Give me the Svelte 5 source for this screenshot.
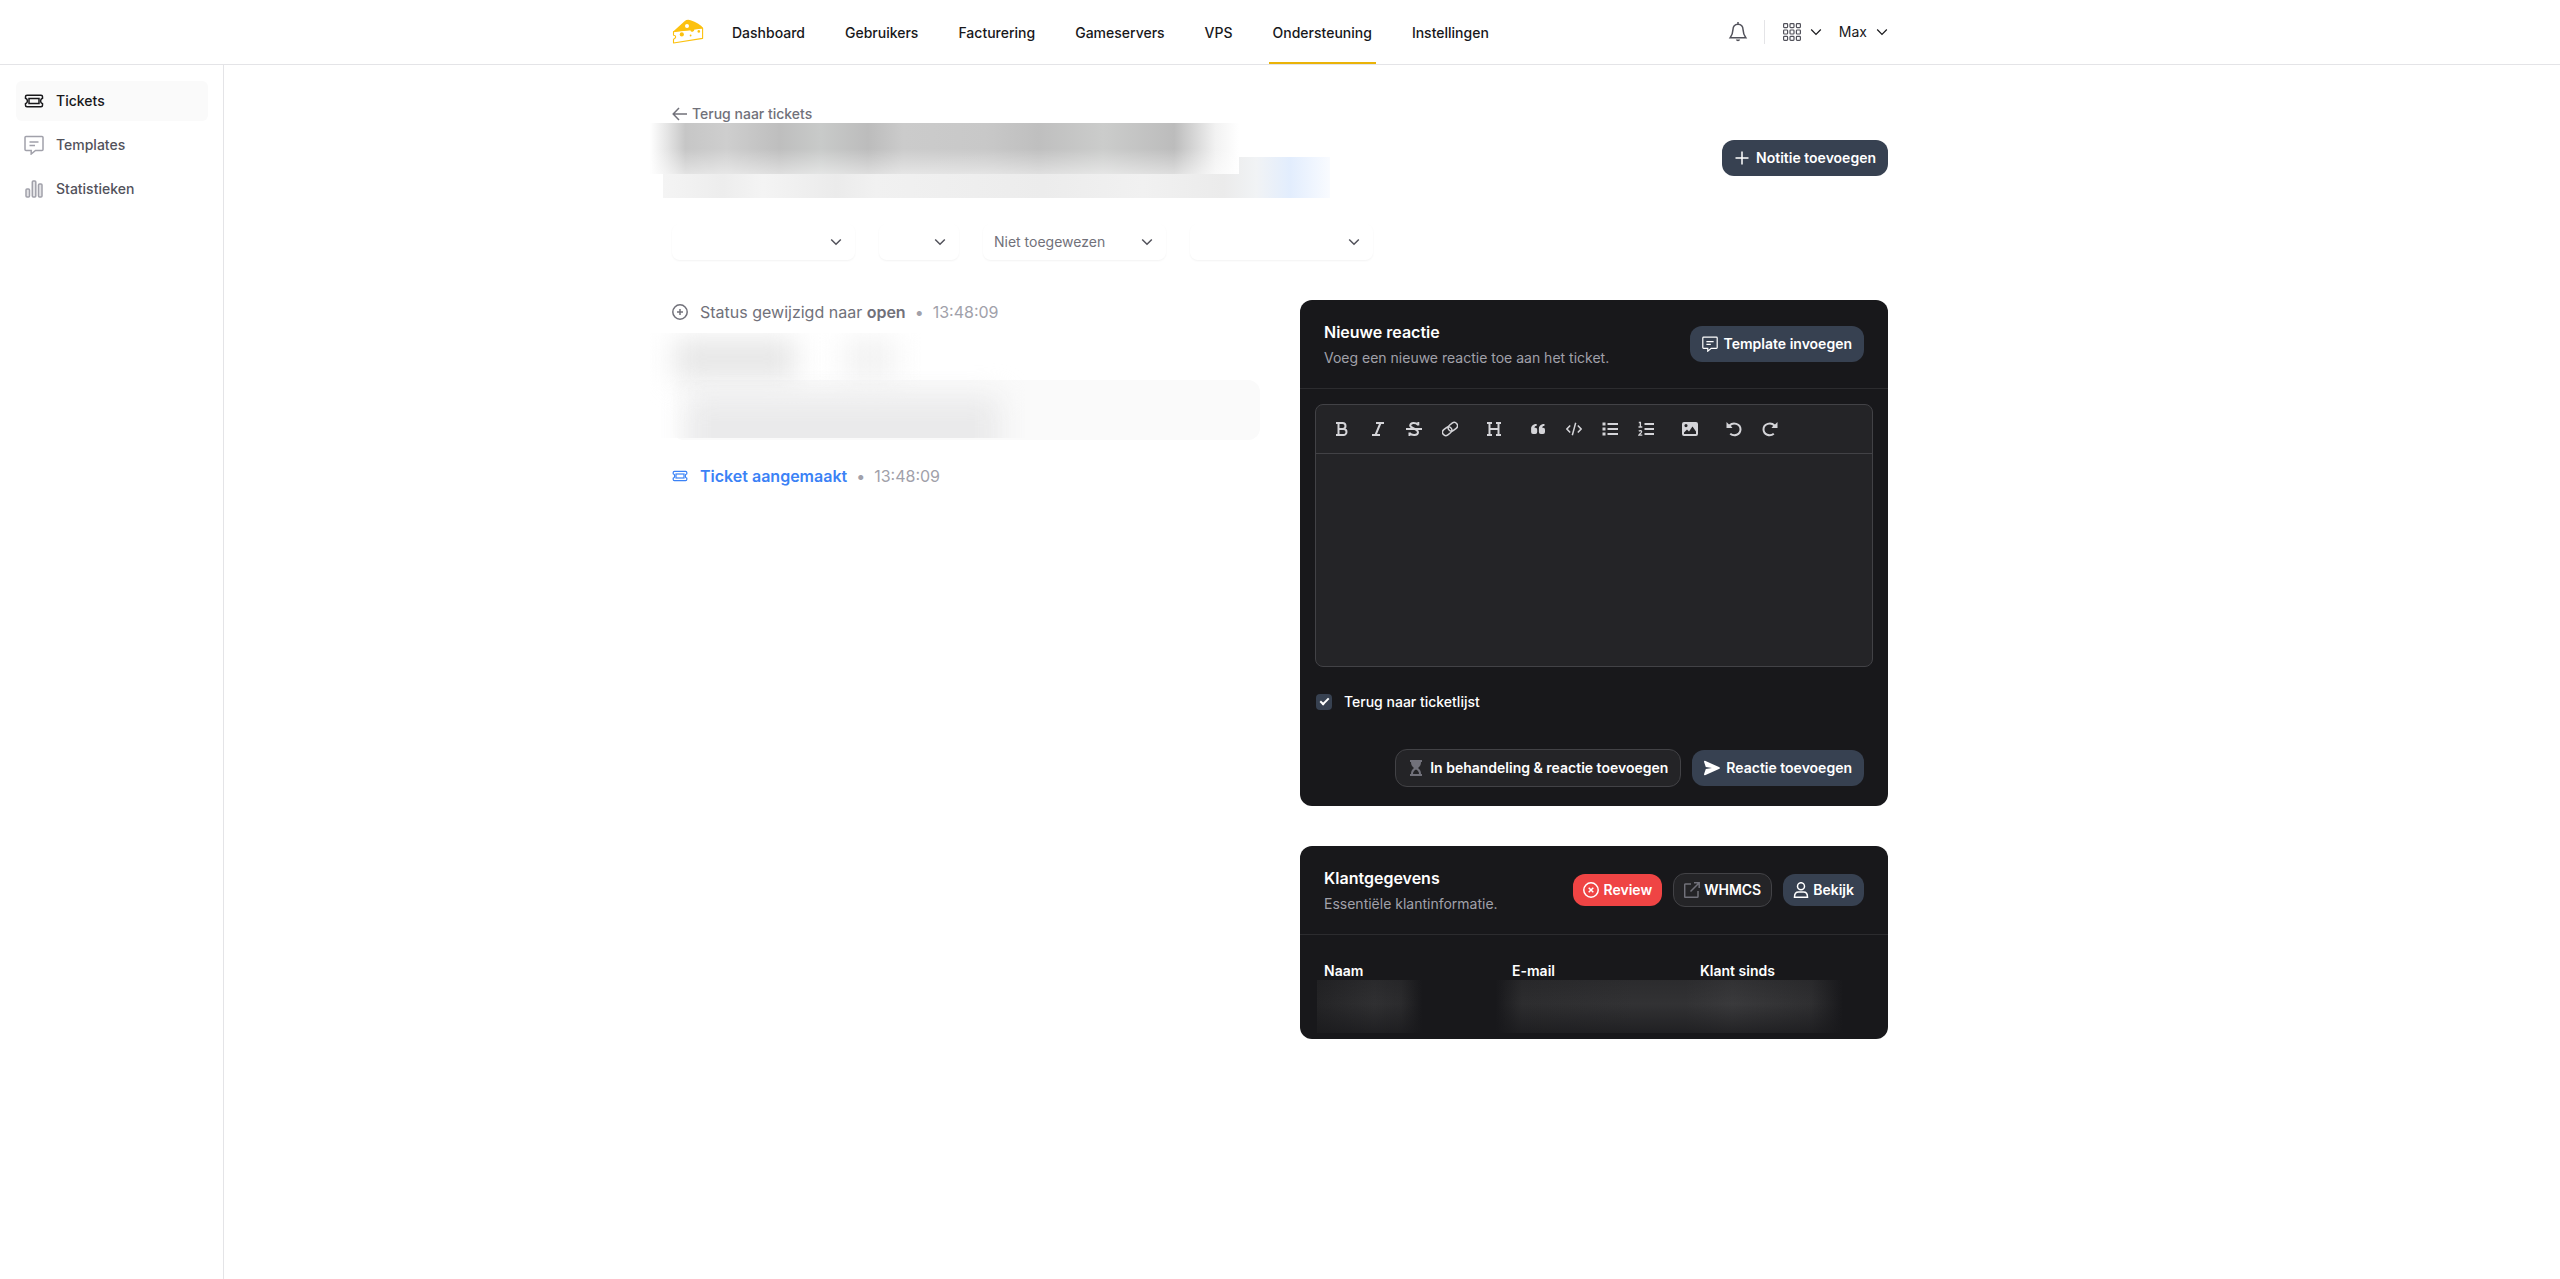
<script>
  const nav = ['Dashboard', 'Gebruikers', 'Facturering', 'Gameservers', 'VPS', 'Ondersteuning', 'Instellingen'];
  const active = 'Ondersteuning';
  const tools = [
    { icon: 'bold', label: 'Vet' },
    { icon: 'italic', label: 'Cursief' },
    { icon: 'strike', label: 'Doorhalen' },
    { icon: 'link', label: 'Link', end: true },
    { icon: 'heading', label: 'Kop', end: true },
    { icon: 'quote', label: 'Citaat' },
    { icon: 'code', label: 'Code' },
    { icon: 'bullets', label: 'Opsomming' },
    { icon: 'numbers', label: 'Genummerde lijst', end: true },
    { icon: 'image', label: 'Afbeelding', end: true },
    { icon: 'undo', label: 'Ongedaan maken' },
    { icon: 'redo', label: 'Opnieuw' }
  ];
  const filters = [
    { label: 'Afdeling', value: '', size: 'wide' },
    { label: 'Prioriteit', value: '', size: 'narrow' },
    { label: 'Medewerker', value: 'Niet toegewezen', size: 'wide' },
    { label: 'Status', value: '', size: 'wide' }
  ];
  let back = $state(true);
</script>

{#snippet ticket()}
  <path d="M3 4.200h14q1.500 0 1.500 1.500v1.500a3 3 0 0 0 0 5.600v1.500q0 1.500-1.500 1.500H3q-1.500 0-1.500-1.500v-1.500a3 3 0 0 0 0-5.600V5.700q0-1.500 1.500-1.500z" />
  <rect x="5" y="7.500" width="10" height="5" />
{/snippet}

{#snippet note()}
  <path d="M2 1.500h16q1 0 1 1v12q0 1-1 1h-6.500L7.200 19v-3.500H2q-1 0-1-1v-12q0-1 1-1z" />
  <path d="M5.500 7h9M5.500 10.500h5.500" />
{/snippet}

{#snippet chevron()}
  <svg class="chev" viewBox="0 0 12 12" aria-hidden="true"><path d="M1.200 3.500 6 8.300l4.800-4.800" /></svg>
{/snippet}

<header class="top">
  <div class="wrap bar">
    <a class="logo" href="#home" aria-label="Home">
      <svg viewBox="0 0 32 26" aria-hidden="true">
        <path fill="#fcc10f" d="M1.200 12.400 12.500 2.200Q15 .2 18.500 1.200 27 3.600 31 9l-6.800 1-2 .3a2 2 0 0 1-3.900.9z" />
        <circle cx="15" cy="7" r="2" fill="#fff" />
        <path fill="none" stroke="#fcc10f" stroke-width="1.100" stroke-linejoin="round" d="M1.500 12.600 30.600 9v10.400L1.500 24v-3.800q2.400-.8 2.100-2.500t-2.100-1.500z" />
        <circle cx="9.800" cy="15.400" r="2.100" fill="#fcc10f" />
        <circle cx="18.600" cy="16.500" r=".9" fill="#fcc10f" />
        <circle cx="26.800" cy="12.400" r="1.300" fill="#fcc10f" />
      </svg>
    </a>
    <nav>
      {#each nav as item}
        <a href="#{item}" class:active={item === active}>{item}</a>
      {/each}
    </nav>
    <div class="tools">
      <button class="plain" aria-label="Meldingen">
        <svg class="i20" viewBox="0 0 20 20" aria-hidden="true"><path d="M10 2.200c3.200 0 5 2.500 5.100 5.800.1 3.600 1.100 5.500 2.700 7.700H2.200c1.600-2.200 2.600-4.100 2.700-7.700C5 4.700 6.800 2.200 10 2.200zM10 0v2" /><path d="M7.800 17.600h4.400q-.4 1.700-2.200 1.700t-2.200-1.700z" fill="currentColor" stroke="none" /></svg>
      </button>
      <span class="divider"></span>
      <button class="plain apps" aria-label="Apps">
        <svg class="i18" viewBox="0 0 18 18" aria-hidden="true">
          {#each [0.6, 7, 13.4] as x}{#each [0.6, 7, 13.4] as y}<rect {x} {y} width="4" height="4" rx=".8" />{/each}{/each}
        </svg>
        {@render chevron()}
      </button>
      <button class="plain user">Max {@render chevron()}</button>
    </div>
  </div>
</header>

<div class="body">
  <aside>
    <a class="current" href="#tickets"><svg class="i20" viewBox="0 0 20 20" aria-hidden="true">{@render ticket()}</svg>Tickets</a>
    <a href="#templates"><svg class="i20" viewBox="0 0 20 20" aria-hidden="true">{@render note()}</svg>Templates</a>
    <a href="#stats"><svg class="i20" viewBox="0 0 20 20" aria-hidden="true"><g fill="#e4e4e7"><rect x="2" y="10" width="3.500" height="8" rx="1" /><rect x="8.300" y="2" width="3.500" height="16" rx="1" /><rect x="14.500" y="5" width="3.500" height="13" rx="1" /></g></svg>Statistieken</a>
  </aside>

  <main>
    <div class="wrap">
      <a class="back" href="#tickets"><svg class="i16" viewBox="0 0 16 16" aria-hidden="true"><path d="M15 8H1.500M7 2 1.200 8 7 14" /></svg>Terug naar tickets</a>
      <div class="heading">
        <div class="redacted" aria-hidden="true">
          <div class="r-title"></div>
          <div class="r-meta"></div>
        </div>
        <button class="btn primary"><svg class="i16" viewBox="0 0 16 16" aria-hidden="true"><path d="M8 1.500v13M1.500 8h13" /></svg>Notitie toevoegen</button>
      </div>

      <div class="filters">
        {#each filters as f}
          <div class="filter {f.size}">
            <select aria-label={f.label}><option>{f.value}</option></select>
            {@render chevron()}
          </div>
        {/each}
      </div>

      <div class="columns">
        <section class="timeline">
          <div class="event">
            <svg class="i16" viewBox="0 0 16 16" aria-hidden="true"><circle cx="8" cy="8" r="7.200" /><path d="M8 5v6M5 8h6" /></svg>
            <span>Status gewijzigd naar <b>open</b></span><i>•</i><time>13:48:09</time>
          </div>
          <div class="message" aria-hidden="true">
            <div class="card"></div>
            <div class="veil">
              <div class="line"><span class="name"></span><span class="when"></span></div>
              <div class="text"></div>
            </div>
          </div>
          <div class="event created">
            <svg class="i16" viewBox="0 0 20 20" aria-hidden="true">{@render ticket()}</svg>
            <b>Ticket aangemaakt</b><i>•</i><time>13:48:09</time>
          </div>
        </section>

        <div class="side">
          <section class="panel">
            <div class="head">
              <div><h2>Nieuwe reactie</h2><p>Voeg een nieuwe reactie toe aan het ticket.</p></div>
              <button class="btn primary"><svg class="i16" viewBox="0 0 20 20" aria-hidden="true">{@render note()}</svg>Template invoegen</button>
            </div>
            <div class="editor">
              <div class="toolbar">
                {#each tools as t}
                  <button class:end={t.end} aria-label={t.label}>
                    <svg class="i16" viewBox="0 0 16 16" aria-hidden="true">
                      {#if t.icon === 'bold'}<path d="M2 2h6.500a3 3 0 0 1 0 6H4.500M8.500 8h1a3 3 0 0 1 0 6H2M4.500 2v12" />
                      {:else if t.icon === 'italic'}<path d="M6 2h8M2 14h8M10.500 2l-5 12" />
                      {:else if t.icon === 'strike'}<path d="M0 8h16M12 3.800C10 1.500 4.500 1.200 4.200 4.500 4 7.500 12 7.500 12 11.200c0 3.800-6.500 3.500-8.500 1" /><path d="M12.300 1v3.500M3.500 11.500V15" />
                      {:else if t.icon === 'link'}<g class="thin" transform="rotate(-38 8 8)"><rect x="-.6" y="4.700" width="10" height="6.600" rx="3.300" /><rect x="6.600" y="4.700" width="10" height="6.600" rx="3.300" /></g>
                      {:else if t.icon === 'heading'}<path d="M1 2h5M10 2h5M1 14h5M10 14h5M3.500 2v12M12.500 2v12M3.500 8h9" />
                      {:else if t.icon === 'quote'}<path class="solid" d="M6.700 3v1.800c-1.500 0-2.200.8-2.200 2h.8a1.900 1.900 0 0 1 1.900 2v2.300A1.900 1.900 0 0 1 5.300 13H3a1.900 1.900 0 0 1-1.900-1.900V7.500C1.100 4.800 3.300 3 6.700 3zM14.500 3v1.800c-1.500 0-2.200.8-2.200 2h.8a1.900 1.900 0 0 1 1.900 2v2.300a1.900 1.900 0 0 1-1.900 1.900h-2.300a1.900 1.900 0 0 1-1.900-1.900V7.500C8.900 4.800 11.100 3 14.500 3z" />
                      {:else if t.icon === 'code'}<path class="thin" d="M4.200 4.500.9 8l3.300 3.500M11.800 4.500 15.100 8l-3.300 3.500M9.700 1.800 6.300 14.200" />
                      {:else if t.icon === 'bullets'}<path d="M5.500 3H16M5.500 8H16M5.500 13H16" /><path class="solid" d="M.5 1.500h3v3h-3zM.5 6.500h3v3h-3zM.5 11.500h3v3h-3z" />
                      {:else if t.icon === 'numbers'}<path d="M6.500 3H16M6.500 8H16M6.500 13H16" /><path class="fine" d="M.8 1.500h1.600V6M.5 6h3.800M.8 10.300c1-1 3-.7 2.800.7-.1.900-1.900 1.900-2.700 3.200h3.400" />
                      {:else if t.icon === 'image'}<path class="solid" fill-rule="evenodd" d="M2 1h12a2 2 0 0 1 2 2v10a2 2 0 0 1-2 2H2a2 2 0 0 1-2-2V3a2 2 0 0 1 2-2zm2 2a1.600 1.600 0 1 0 0 3.200A1.600 1.600 0 0 0 4 3zM2 13h12v-2.500L10.500 5.500 7 10.500 5 8.500l-3 3z" />
                      {:else if t.icon === 'undo'}<path d="M3.500 4.500C7 .8 14.500 2.500 14.500 8.300c0 5.700-6.500 7.500-10.300 4.400" /><path class="solid" d="M.5 1v6h6l-1.700-2.300L2.500 3z" />
                      {:else}<path d="M12.500 4.500C9 .8 1.500 2.500 1.500 8.300c0 5.700 6.500 7.500 10.300 4.400" /><path class="solid" d="M15.500 1v6h-6l1.700-2.300L13.500 3z" />{/if}
                    </svg>
                  </button>
                {/each}
              </div>
              <textarea aria-label="Reactie"></textarea>
            </div>
            <label class="check"><input type="checkbox" bind:checked={back} />Terug naar ticketlijst</label>
            <div class="actions">
              <button class="btn outline"><svg class="i16" viewBox="0 0 16 16" aria-hidden="true"><path fill="#71717a" stroke="none" fill-rule="evenodd" d="M2 0h12v2h-1c0 3-1 4.500-3 6 2 1.500 3 3 3 6h1v2H2v-2h1c0-3 1-4.500 3-6-2-1.500-3-3-3-6H2zm3 14h6c0-2-1-3.500-3-4.500C6 10.500 5 12 5 14z" /></svg>In behandeling &amp; reactie toevoegen</button>
              <button class="btn primary"><svg class="i16" viewBox="0 0 16 16" aria-hidden="true"><path fill="#fff" stroke="none" d="M1 .8Q0 .5 0 1.800L1.800 6.900 8 8 1.800 9.100 0 14.200q0 1.300 1 1L15.500 8.800q.8-.8 0-1.600z" /></svg>Reactie toevoegen</button>
            </div>
          </section>

          <section class="panel">
            <div class="head">
              <div><h2>Klantgegevens</h2><p>Essentiële klantinformatie.</p></div>
              <div class="group">
                <button class="btn small danger"><svg class="i16" viewBox="0 0 16 16" aria-hidden="true"><circle cx="8" cy="8" r="7.200" /><path d="m5.700 5.700 4.600 4.600M10.300 5.700l-4.600 4.600" /></svg>Review</button>
                <button class="btn small outline"><svg class="i16 dim" viewBox="0 0 16 16" aria-hidden="true"><path d="M7 2H1.500q-.8 0-.8.8v11.700q0 .8.800.8h11.700q.8 0 .8-.8V9M10 .8h5.200V6M15 1 6.500 9.500" /></svg>WHMCS</button>
                <button class="btn small primary"><svg class="i16" viewBox="0 0 16 16" aria-hidden="true"><circle cx="8" cy="4.200" r="3.500" /><path d="M1.500 15.200q0-5.200 4-5.200h5q4 0 4 5.200z" /></svg>Bekijk</button>
              </div>
            </div>
            <dl>
              <dt>Naam</dt><dt>E-mail</dt><dt>Klant sinds</dt>
            </dl>
            <div class="r-client" aria-hidden="true"></div>
          </section>
        </div>
      </div>
    </div>
  </main>
</div>

<style>
  :global(body) { margin: 0; background: #fff; }
  :global(#app) { font: 500 14px/20px Inter, 'Liberation Sans', sans-serif; color: #18181b; min-height: 100vh; display: flex; flex-direction: column; }
  :global(#app *) { box-sizing: border-box; }
  a { color: inherit; text-decoration: none; }
  button, select, textarea { font: inherit; color: inherit; margin: 0; }
  svg { display: block; flex: none; fill: none; stroke: currentColor; stroke-width: 1.5; }
  .i20 { width: 20px; height: 20px; }
  .i18 { width: 18px; height: 18px; }
  .i16 { width: 16px; height: 16px; }
  .chev { width: 12px; height: 12px; }
  .wrap { width: 100%; max-width: 1280px; margin: 0 auto; padding: 0 32px; }

  .top { border-bottom: 1px solid #e4e4e7; }
  .bar { display: flex; align-items: center; height: 64px; }
  .logo svg { width: 32px; height: 26px; stroke: none; }
  nav { display: flex; gap: 32px; margin-left: 24px; align-self: stretch; }
  nav a { display: flex; align-items: center; padding: 4px 4px 0; border-bottom: 2px solid transparent; }
  nav a.active { border-color: #eab308; }
  .tools { display: flex; align-items: center; margin-left: auto; }
  .plain { display: flex; align-items: center; gap: 9px; padding: 0; border: 0; background: none; font-weight: 400; cursor: pointer; }
  .plain > svg { color: #52525b; }
  .plain > .chev { color: #18181b; stroke-width: 1.2; }
  .apps .i18 { stroke-width: 1.2; }
  .divider { width: 1px; height: 24px; margin: 0 18px 0 16px; background: #e4e4e7; }
  .user { margin-left: 17px; }

  .body { display: flex; flex: 1; }
  aside { display: flex; flex-direction: column; gap: 4px; flex: none; width: 224px; padding: 16px 15px 16px 16px; border-right: 1px solid #e4e4e7; }
  aside a { display: flex; align-items: center; gap: 12px; height: 40px; padding: 0 8px; border-radius: 6px; color: #52525b; }
  aside svg { color: #a1a1aa; }
  aside .current, aside .current svg { color: #18181b; background: #fafafa; }

  main { flex: 1; min-width: 0; padding: 39px 224px 40px 0; }
  .back { display: flex; align-items: center; gap: 4px; width: fit-content; height: 19px; color: #71717a; }
  .heading { display: flex; justify-content: space-between; align-items: flex-start; height: 101px; }
  .heading .btn { margin-top: 17px; }
  .redacted { display: grid; margin-left: -22px; }
  .r-title { grid-area: 1 / 1; z-index: 1; width: 589px; height: 51px; background: linear-gradient(rgb(255 255 255 / 0) 50%, rgb(255 255 255 / .5)), linear-gradient(90deg, #fff, #e4e4e4 3%, #c6c6c6 6%, #cecece 13%, #bebebe 22%, #c8cac9 29%, #bcbcbc 37%, #cbcbcb 43%, #c8c8c8 57%, #bfbfbf 66%, #cbcccb 77%, #bcbcbc 89%, #f2f2f2 96%, #fff); }
  .r-meta { grid-area: 1 / 1; width: 667px; height: 41px; margin: 34px 0 0 13px; background: linear-gradient(90deg, #f4f4f4, #ededed 9%, #f4f4f4 15%, #ebebeb 26%, #f1f1f1 32%, #ececec 57%, #f1f1f1 72%, #ebebeb 84%, #f1f3f5 89%, #e2edfd 94%, #f9fbff); }

  .filters { display: flex; gap: 24px; }
  .filter { display: flex; align-items: center; height: 36px; padding-right: 13px; border-radius: 8px; box-shadow: 0 1px 2px rgb(0 0 0 / .05); color: #71717a; }
  .filter.wide { width: 183px; }
  .filter.narrow { width: 80px; }
  .filter svg { color: #52525b; pointer-events: none; }
  select { flex: 1; min-width: 0; height: 36px; padding: 0 11px; border: 0; background: none; appearance: none; font-weight: 400; }

  .columns { display: grid; grid-template-columns: 1fr 1fr; gap: 40px; margin-top: 40px; align-items: start; }
  .event { display: flex; align-items: center; gap: 9px; height: 24px; font: 400 16px/24px Inter, sans-serif; color: #71717a; }
  .event svg { margin-right: 3px; }
  .event b { font-weight: 600; }
  .event time, .event i { color: #a1a1aa; font-style: normal; }
  .event.created { color: #3b82f6; }
  .message { display: grid; height: 140px; padding-top: 9px; }
  .card { grid-area: 1 / 1; height: 60px; margin-top: 47px; border-radius: 12px; background: #fafafa; }
  .veil { grid-area: 1 / 1; z-index: 1; height: 105px; margin: 0 138px 0 -22px; overflow: hidden; background: linear-gradient(90deg, #fff 4%, #fff0 12%); }
  .line { display: flex; gap: 48px; height: 49px; padding: 6px 0 0 24px; }
  .name, .when { width: 122px; height: 40px; background: #e6e6e6; filter: blur(14px); }
  .when { width: 52px; background: #f2f2f2; }
  .text { width: 314px; height: 72px; margin: 14px 0 0 36px; background: #eaeaeb; filter: blur(14px); }

  .side { display: grid; gap: 40px; }
  .panel { display: flow-root; border-radius: 12px; background: #18181b; color: #fff; }
  .head { display: flex; align-items: center; justify-content: space-between; height: 89px; padding: 0 24px; border-bottom: 1px solid #2c2c2f; }
  h2 { margin: 0; font-size: 16px; line-height: 24px; font-weight: 600; }
  p { margin: 4px 0 0; color: #a1a1aa; font-weight: 400; }
  .btn { display: inline-flex; align-items: center; gap: 6px; height: 36px; padding: 0 12px; border: 0; border-radius: 12px; font-weight: 600; white-space: nowrap; color: #fff; cursor: pointer; }
  .primary { background: #374151; }
  .danger { background: #ef4444; }
  .outline { height: 38px; border: 1px solid #424246; background: #242427; }
  .small { height: 32px; padding: 0 10px; gap: 4px; }
  .small.outline { height: 34px; }
  .dim { color: #71717a; }
  .group, .actions { display: flex; align-items: center; gap: 11px; }

  .editor { margin: 15px; border: 1px solid #424246; border-radius: 8px; background: #242427; overflow: hidden; }
  .toolbar { display: flex; align-items: center; height: 49px; padding: 0 8px; border-bottom: 1px solid #424246; }
  .toolbar button { display: grid; place-items: center; width: 36px; height: 36px; padding: 0; border: 0; background: none; color: #d4d4d8; }
  .toolbar .end { margin-right: 8px; }
  .toolbar svg { stroke-width: 2; }
  .solid { fill: currentColor; stroke: none; }
  .thin { stroke-width: 1.5; }
  .fine { stroke-width: 1.3; }
  textarea { display: block; width: 100%; height: 212px; padding: 12px; border: 0; background: none; resize: none; }
  .check { display: flex; align-items: center; gap: 12px; margin: 25px 16px 0; height: 20px; }
  .check input { appearance: none; display: grid; place-items: center; width: 16px; height: 16px; margin: 0; border-radius: 4px; background: #374151; }
  .check input:checked::after { content: ''; width: 7px; height: 3px; margin-bottom: 3px; border: solid #fff; border-width: 0 0 2px 2px; transform: rotate(-45deg); }
  .actions { justify-content: flex-end; margin: 37px 24px 19px; }

  dl { display: grid; grid-template-columns: repeat(3, 1fr); margin: 26px 0 0 24px; }
  dt { font-weight: 600; height: 19px; }
  .r-client { height: 53px; margin: 0 45px 6px 17px; background: linear-gradient(#18181b40, #18181b00 45%, #18181bb0), linear-gradient(90deg, #242426, #303032 11%, #2b2b2d 16%, #18181b 20%, #18181b 34%, #2d2d2f 39%, #323234 60%, #323234 70%, #3a3a3c 79%, #2f2f31 94%, #18181b); }
</style>
